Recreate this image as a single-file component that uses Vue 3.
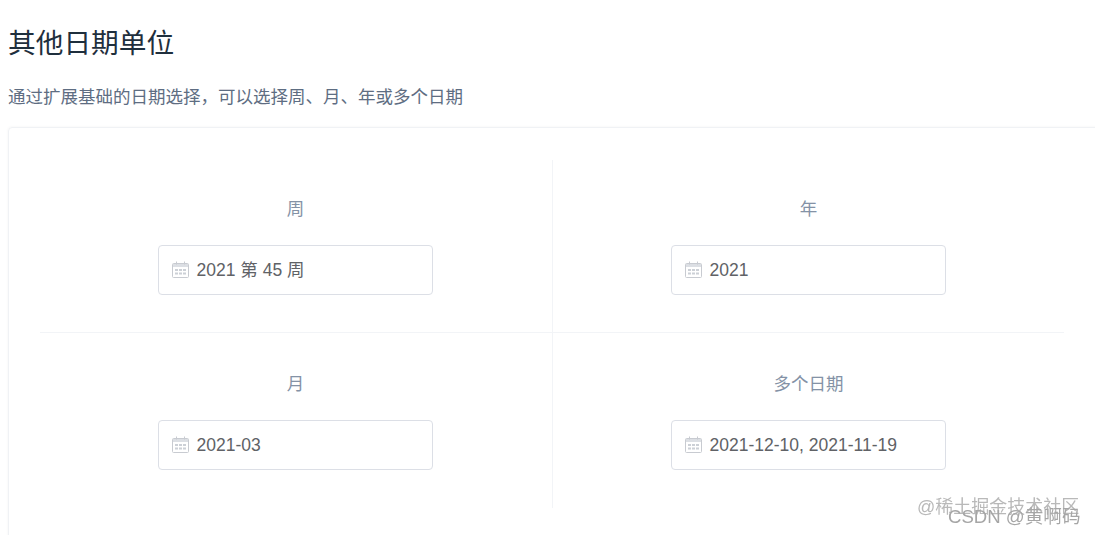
<script setup>
const cells = [
  { label: '周', value: '2021 第 45 周' },
  { label: '年', value: '2021' },
  { label: '月', value: '2021-03' },
  { label: '多个日期', value: '2021-12-10, 2021-11-19' },
]
</script>

<template>
  <div class="page">
    <h1 class="title">其他日期单位</h1>
    <p class="desc">通过扩展基础的日期选择&#xFF0C;可以选择周、月、年或多个日期</p>
    <div class="card">
      <div class="grid">
        <div v-for="c in cells" :key="c.label" class="cell">
          <div class="label">{{ c.label }}</div>
          <div class="input">
            <svg class="icon" width="17" height="17" viewBox="0 0 17 17" fill="none">
              <rect x="0.5" y="2.5" width="16" height="14" rx="1" stroke="#c8cbd1" />
              <rect x="1" y="3" width="15" height="3" fill="#dcdfe4" />
              <path d="M4.5 0.5v3M12.5 0.5v3" stroke="#c8cbd1" />
              <path d="M3 9h3M7 9h3M11 9h3M3 12.5h3M7 12.5h3M11 12.5h3" stroke="#ccd0d6" stroke-width="2" />
            </svg>
            <span class="value">{{ c.value }}</span>
          </div>
        </div>
      </div>
    </div>
    <span class="mark mark-a">@稀土掘金技术社区</span>
    <span class="mark mark-b">CSDN @黄啊码</span>
  </div>
</template>

<style>
html, body { margin: 0; background: #fff; overflow: hidden; }
</style>

<style scoped>
.page {
  position: relative;
  width: 1095px;
  height: 535px;
  overflow: hidden;
  box-sizing: border-box;
  padding: 26px 0 0 8px;
  font-family: "Liberation Sans", "Noto Sans CJK SC", sans-serif;
  color: #606266;
}
.title {
  margin: 0;
  font-size: 27.7px;
  line-height: 36px;
  font-weight: 400;
  color: #1f2f3d;
}
.desc {
  margin: 22px 0 0;
  font-size: 17.5px;
  line-height: 26px;
  color: #5e6d82;
}
.card {
  margin-top: 17px;
  width: 1120px;
  height: 440px;
  box-sizing: border-box;
  border: 1px solid #f0f2f5;
  border-radius: 4px;
  box-shadow: 0 0 3px rgba(0, 0, 0, 0.05);
  padding: 32px 0 0 31px;
}
.grid {
  display: grid;
  grid-template-columns: 513px 511px;
  grid-template-rows: 173px 175px;
}
.cell {
  display: flex;
  flex-direction: column;
  align-items: center;
  padding-top: 37px;
  box-sizing: border-box;
}
.cell:nth-child(odd) { border-right: 1px solid #f2f4f7; padding-right: 1px; }
.cell:nth-child(-n+2) { border-bottom: 1px solid #f2f4f7; }
.cell:nth-child(n+3) { padding-top: 39px; }
.label {
  font-size: 17.5px;
  line-height: 24px;
  color: #8492a6;
}
.input {
  margin-top: 24px;
  width: 275px;
  height: 50px;
  box-sizing: border-box;
  border: 1px solid #dcdfe6;
  border-radius: 4px;
  display: flex;
  align-items: center;
  padding-left: 13px;
  background: #fff;
}
.icon { flex: none; margin-bottom: 2px; }
.value {
  margin-left: 7.5px;
  font-size: 17.5px;
  line-height: 24px;
  color: #606266;
  white-space: nowrap;
}
.mark {
  position: absolute;
  white-space: nowrap;
  filter: blur(0.4px);
}
.mark-a {
  left: 917px;
  top: 496px;
  font-size: 18px;
  line-height: 22px;
  color: #b9b9b9;
}
.mark-b {
  left: 948px;
  top: 506px;
  font-size: 18.6px;
  line-height: 22px;
  color: #a6a6a6;
}
</style>
